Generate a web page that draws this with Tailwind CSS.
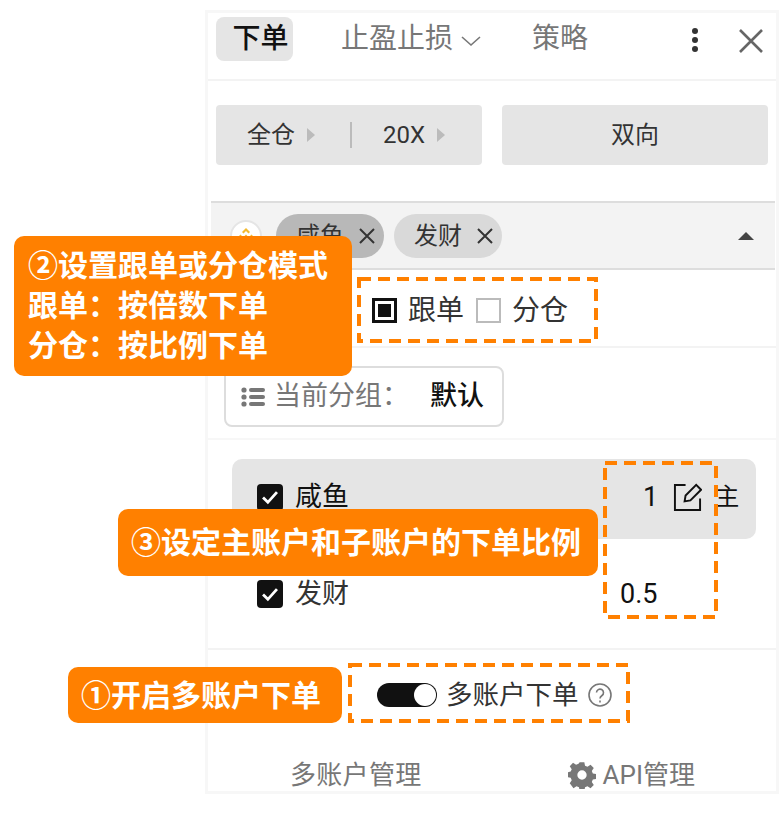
<!DOCTYPE html>
<html lang="zh-CN">
<head>
  <meta charset="UTF-8">
  <title>多账户下单</title>
  <script src="https://cdn.jsdelivr.net/npm/@tailwindcss/browser@4"></script>
</head>
<body class="relative h-[817px] w-[781px] overflow-hidden bg-white font-['Roboto','Noto_Sans_CJK_SC',sans-serif] text-[#333]">
  <!-- Panel -->
  <div class="ml-[205px] mt-[10px] flex h-[784px] w-[574px] flex-col border-[3px] border-[#f7f7f7] text-[27px]">
    <!-- Tabs -->
    <div class="flex h-[68px] shrink-0 items-start border-b-2 border-[#f3f3f3] pl-[8px] pt-[4px] text-[28px] text-[#777]">
      <div class="flex h-[44px] w-[77px] items-center justify-center rounded-[8px] bg-[#e5e5e5] pl-[12px] font-medium text-[#111]">下单</div>
      <div class="ml-[48px] flex h-[44px] items-center">止盈止损
        <svg class="ml-[7px] mt-[3px]" width="22" height="12" viewBox="0 0 22 12" fill="none" stroke="#777" stroke-width="1.6"><path d="M2 2l9 8 9-8"/></svg>
      </div>
      <div class="ml-[50px] flex h-[44px] items-center">策略</div>
      <svg class="ml-auto mt-[10px]" width="8" height="26" viewBox="0 0 8 26" fill="#333"><circle cx="4" cy="4" r="3"/><circle cx="4" cy="13" r="3"/><circle cx="4" cy="22" r="3"/></svg>
      <svg class="ml-[39px] mr-[12px] mt-[11px]" width="26" height="26" viewBox="0 0 26 26" fill="none" stroke="#666" stroke-width="2.6"><path d="M2 2l22 22M24 2L2 24"/></svg>
    </div>

    <!-- Margin / direction -->
    <div class="flex shrink-0 gap-[20px] pl-[8px] pt-[24px] text-[24px]">
      <div class="flex h-[60px] w-[266px] items-center rounded-[4px] bg-[#e5e5e5] pl-[31px]">
        <span>全仓</span>
        <span class="ml-[12px] h-0 w-0 border-y-[7px] border-l-[8px] border-y-transparent border-l-[#bbb]"></span>
        <span class="ml-[35px] h-[26px] w-[2px] bg-[#bbb]"></span>
        <span class="ml-[31px]">20X</span>
        <span class="ml-[12px] h-0 w-0 border-y-[7px] border-l-[8px] border-y-transparent border-l-[#bbb]"></span>
      </div>
      <div class="flex h-[60px] w-[266px] items-center justify-center rounded-[4px] bg-[#e5e5e5]">双向</div>
    </div>

    <!-- Accounts select -->
    <div class="mt-[36px] ml-[3px] flex h-[69px] w-[564px] shrink-0 items-center border-y-2 border-[#ddd] bg-[#f3f3f3] pl-[19px]">
      <span class="flex h-[32px] w-[32px] items-center justify-center rounded-full border-2 border-[#e5e5e5] bg-white">
        <svg width="18" height="18" viewBox="0 0 18 18" fill="#f3ba2f"><path d="M9 1l4 4-1.500 1.500L9 4 6.500 6.500 5 5zM3.500 7.500L5 9l-1.500 1.500L2 9zM14.500 7.500L16 9l-1.500 1.500L13 9zM9 7.500L10.500 9 9 10.500 7.500 9zM5 13l1.500-1.500L9 14l2.500-2.500L13 13l-4 4z"/></svg>
      </span>
      <span class="ml-[14px] flex h-[44px] w-[108px] items-center rounded-full bg-[#b8b8b8] pl-[20px] text-[24px]">咸鱼
        <svg class="ml-[14px]" width="18" height="18" viewBox="0 0 18 18" fill="none" stroke="#333" stroke-width="2"><path d="M2 2l14 14M16 2L2 16"/></svg>
      </span>
      <span class="ml-[10px] flex h-[44px] w-[108px] items-center rounded-full bg-[#d9d9d9] pl-[20px] text-[24px]">发财
        <svg class="ml-[14px]" width="18" height="18" viewBox="0 0 18 18" fill="none" stroke="#333" stroke-width="2"><path d="M2 2l14 14M16 2L2 16"/></svg>
      </span>
      <span class="ml-auto mr-[21px] h-0 w-0 border-x-[8px] border-b-[8px] border-x-transparent border-b-[#444]"></span>
    </div>

    <!-- Mode -->
    <div class="flex h-[78px] shrink-0 items-center border-b-2 border-[#f3f3f3] pl-[164px] pt-[5px] text-[28px]">
      <span class="flex h-[25px] w-[25px] items-center justify-center border-[3px] border-[#111]"><span class="h-[13px] w-[13px] bg-[#111]"></span></span>
      <span class="ml-[11px]">跟单</span>
      <span class="ml-[12px] h-[25px] w-[25px] border-2 border-[#bbb]"></span>
      <span class="ml-[11px]">分仓</span>
    </div>

    <!-- Group -->
    <div class="h-[92px] shrink-0 border-b-2 border-[#f7f7f7] pl-[16px] pt-[18px]">
      <div class="flex h-[61px] w-[280px] items-center rounded-[8px] border-2 border-[#ddd] pl-[15px] text-[#777]">
        <svg width="24" height="22" viewBox="0 0 24 22" fill="#777"><circle cx="3" cy="4" r="2.600"/><circle cx="3" cy="11" r="2.600"/><circle cx="3" cy="18" r="2.600"/><rect x="8" y="2" width="16" height="4" rx="2"/><rect x="8" y="9" width="16" height="4" rx="2"/><rect x="8" y="16" width="16" height="4" rx="2"/></svg>
        <span class="ml-[9px]">当前分组&#xFF1A;</span>
        <span class="ml-[21px] font-medium text-[#111]">默认</span>
      </div>
    </div>

    <!-- Accounts list -->
    <div class="ml-[24px] mt-[19px] flex h-[80px] w-[524px] shrink-0 items-start rounded-[10px] bg-[#e5e5e5] pt-[25px] pl-[25px] text-[#111]">
      <span class="flex h-[27px] w-[26px] items-center justify-center rounded-[4px] bg-[#111]">
        <svg width="18" height="15" viewBox="0 0 16 14" fill="none" stroke="#fff" stroke-width="2.600"><path d="M1.500 7l4.500 4.500 8.500-9.500"/></svg>
      </span>
      <span class="ml-[12px] leading-[27px]">咸鱼</span>
      <span class="ml-[294px] leading-[27px]">1</span>
      <svg class="ml-[15px] -mt-[1px]" width="29" height="29" viewBox="0 0 30 30" fill="none" stroke="#111" stroke-width="2"><path d="M13 2H2v26h26V16"/><path d="M12 19l1-6L24 2l5 5-11 11z"/></svg>
      <span class="ml-[13px] text-[24px] leading-[27px]">主</span>
    </div>
    <div class="flex h-[111px] shrink-0 items-start border-b-2 border-[#f3f3f3] pl-[49px] pt-[41px]">
      <span class="flex h-[28px] w-[26px] items-center justify-center rounded-[4px] bg-[#111]">
        <svg width="18" height="15" viewBox="0 0 16 14" fill="none" stroke="#fff" stroke-width="2.600"><path d="M1.500 7l4.500 4.500 8.500-9.500"/></svg>
      </span>
      <span class="ml-[12px] leading-[28px]">发财</span>
      <span class="ml-[271px] leading-[28px] text-[#111]">0.5</span>
    </div>

    <!-- Multi account switch -->
    <div class="flex h-[90px] shrink-0 items-center pl-[169px] text-[26.5px]">
      <span class="flex h-[24px] w-[60px] items-center justify-end rounded-full bg-[#111] pr-[1px]"><span class="h-[22px] w-[22px] rounded-full bg-white"></span></span>
      <span class="ml-[9px]">多账户下单</span>
      <svg class="ml-[9px]" width="24" height="24" viewBox="0 0 24 24" fill="none" stroke="#777" stroke-width="1.600"><circle cx="12" cy="12" r="11"/><path d="M8.500 9.500a3.500 3.500 0 1 1 5.500 3c-1.300.9-2 1.500-2 3"/><path d="M12 17.500v2"/></svg>
    </div>

    <!-- Footer -->
    <div class="flex shrink-0 items-center pl-[82px] pt-[19px] text-[26px] leading-[32px] text-[#777]">
      <span class="tracking-[0.3px]">多账户管理</span>
      <svg class="ml-[146px]" width="28" height="28" viewBox="0 0 24 24" fill="#777"><path fill-rule="evenodd" d="M10 1h4l.6 3 2.100.9 2.600-1.700 2.800 2.800-1.700 2.600.9 2.100 3 .6v4l-3 .6-.9 2.100 1.700 2.600-2.800 2.800-2.600-1.700-2.100.9-.6 3h-4l-.6-3-2.100-.9-2.600 1.700L1.500 19l1.700-2.600-.9-2.100-3-.6v-4l3-.6.9-2.100L1.500 4.400 4.300 1.600 6.900 3.300 9 2.400zM12 8a4 4 0 1 0 0 8 4 4 0 0 0 0-8z"/></svg>
      <span class="ml-[7px]">API管理</span>
    </div>
  </div>

  <!-- Annotations -->
  <div class="absolute left-[14px] top-[236px] flex h-[140px] w-[338px] flex-col justify-center rounded-[10px] bg-[#ff8000] pl-[14px] text-[30px] font-bold leading-[40px] text-white">
    <div>②设置跟单或分仓模式</div>
    <div>跟单&#xFF1A;按倍数下单</div>
    <div>分仓&#xFF1A;按比例下单</div>
  </div>
  <div class="absolute left-[118px] top-[509px] flex h-[67px] w-[480px] items-center rounded-[10px] bg-[#ff8000] pl-[13px] text-[30px] font-bold text-white">③设定主账户和子账户的下单比例</div>
  <div class="absolute left-[68px] top-[667px] flex h-[56px] w-[274px] items-center rounded-[10px] bg-[#ff8000] pl-[13px] text-[30px] font-bold text-white">①开启多账户下单</div>

  <svg class="absolute left-[357px] top-[277px]" width="241" height="66" fill="none" stroke="#ff8000" stroke-width="4" stroke-dasharray="12 7"><rect x="2" y="2" width="237" height="62"/></svg>
  <svg class="absolute left-[603px] top-[461px]" width="115" height="158" fill="none" stroke="#ff8000" stroke-width="4" stroke-dasharray="12 7"><rect x="2" y="2" width="111" height="154"/></svg>
  <svg class="absolute left-[348px] top-[663px]" width="282" height="60" fill="none" stroke="#ff8000" stroke-width="4" stroke-dasharray="12 7"><rect x="2" y="2" width="278" height="56"/></svg>
</body>
</html>
